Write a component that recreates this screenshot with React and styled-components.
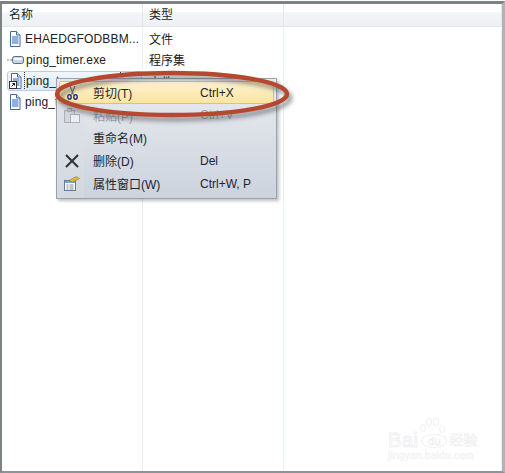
import React from 'react'
import styled, { createGlobalStyle } from 'styled-components'

const Global = createGlobalStyle`
html, body { margin: 0; padding: 0; background: #fff; }
body { font-family: "Liberation Sans", "Noto Sans CJK SC", sans-serif; }
`

const Page = styled.div`
position: relative;
width: 505px;
height: 473px;
overflow: hidden;
box-sizing: border-box;
padding-top: 1px;
`

const Frame = styled.div`
height: 100%;
box-sizing: border-box;
border-style: solid;
border-width: 3px 3px 2px 2px;
border-color: #7d8285 #b0b3b6 #8f9396 #7d8285;
display: flex;
flex-direction: column;
background: #fff;
`

const Header = styled.div`
display: grid;
grid-template-columns: 141px 141px 1fr;
height: 22px;
flex: none;
background: linear-gradient(#ffffff 0, #ffffff 35%, #f3f5f7 40%, #eef0f3 100%);
border-bottom: 1px solid #e3e6ea;
`

const HeadCell = styled.div`
padding-left: ${p => p.$first ? '7px' : '6px'};
font-size: 12px;
line-height: 23px;
color: #1c2530;
border-right: 1px solid #e2e5e9;
`

const Body = styled.div`
flex: 1;
display: grid;
grid-template-columns: 141px 141px 1fr;
grid-template-rows: 21px 21px 22px 20px 1fr;
padding-top: 1px;
`

const Cell = styled.div`
display: flex;
align-items: center;
gap: 2px;
font-size: 12px;
color: #202020;
padding-left: 6px;
white-space: nowrap;
overflow: hidden;
border-right: 1px solid #e6eef8;
`

const Selected = styled(Cell)`
margin: 1px 1px 1px 5px;
padding-left: 1px;
height: 20px;
box-sizing: border-box;
background: linear-gradient(#f0f6fe, #dfeafa);
border: 1px solid #b9cde8;
border-radius: 3px;
`

const IconSlot = styled.span`
display: flex;
flex: none;
width: ${p => p.$wide ? '17px' : '15px'};
margin-left: ${p => p.$wide ? '-1px' : 0};
`

const Name = styled.span`
letter-spacing: 0.15px;
${p => p.$focus && 'outline: 1px dotted #333; padding: 2px 60px 2px 1px; margin-left: -1px;'}
`

const Filler = styled.div`
border-right: 1px solid ${p => p.$last ? 'transparent' : '#e6eef8'};
`

const Menu = styled.div`
position: absolute;
left: 56px;
top: 78px;
width: 221px;
height: 121px;
box-sizing: border-box;
border: 1px solid #98a3b0;
background: linear-gradient(#e9ecf1, #ccd3dd);
box-shadow: 2px 2px 3px rgba(0,0,0,0.25);
display: flex;
flex-direction: column;
padding: 2px;
`

const Gutter = styled.div`
position: absolute;
left: 0;
top: 0;
bottom: 0;
width: 27px;
background: linear-gradient(#e3e6eb, #d3d8e0);
`

const Item = styled.div`
position: relative;
height: ${p => p.$h || 23}px;
flex: none;
display: grid;
grid-template-columns: 34px 107px 1fr;
align-items: center;
font-size: 12px;
color: ${p => p.$off ? '#9aa0a8' : '#1c2430'};
box-sizing: border-box;
${p => p.$active && `
background: linear-gradient(#fdf3d0, #fbe3a0);
box-shadow: inset 0 0 0 1px #e5c365;
border-radius: 2px;
`}
`

const ItemIcon = styled.span`
display: flex;
justify-content: center;
width: 22px;
margin-left: 2px;
`

const Oval = styled.svg`
position: absolute;
left: 45px;
top: 62px;
pointer-events: none;
`

const Mark = styled.div`
position: absolute;
left: 388px;
top: 431px;
width: 92px;
color: #fff;
-webkit-text-stroke: 1px #f0f0f2;
`

const Paw = styled.svg`
position: absolute;
left: 31px;
top: -15px;
`

const MarkTop = styled.div`
display: flex;
align-items: center;
font-size: 20px;
line-height: 19px;
letter-spacing: 0.5px;
`

const MarkBadge = styled.span`
font-size: 11px;
line-height: 12px;
width: 24px;
margin: 0 2px 0 3px;
text-align: center;
letter-spacing: 0;
border: 1px solid #f0f0f2;
border-radius: 50%;
flex: none;
-webkit-text-stroke: 0.5px #ececee;
`

const MarkCn = styled.span`
font-size: 14px;
letter-spacing: 0;
-webkit-text-stroke: 0.5px #ececee;
`

const MarkUrl = styled.div`
font-size: 10px;
line-height: 10px;
letter-spacing: 0.3px;
color: #f3f3f5;
-webkit-text-stroke: 0.4px #f3f3f5;
margin-top: 1px;
`

const DocIcon = ({ shortcut }) => (
  <svg width="14" height="16" viewBox="0 0 14 16">
    <path d="M2.500 .5h6l3.500 3.500v11.500h-9.500z" fill="#fff" stroke="#47689c" />
    <path d="M8.500 .5v3.500h3.500" fill="#dfe8f4" stroke="#47689c" />
    <path d="M4 6h6.500M4 8h6.500M4 10h6.500M4 12h6.500" stroke="#2a5fbb" />
    {shortcut && <>
      <rect x=".5" y="8.500" width="7" height="7" fill="#fff" stroke="#333" />
      <path d="M2.500 13.500l3-3M3.500 10.500h2v2" stroke="#111" fill="none" />
    </>}
  </svg>
)

const ExeIcon = () => (
  <svg width="17" height="12" viewBox="0 0 17 12">
    <path d="M0 6h6" stroke="#7a8290" strokeDasharray="2 1" />
    <rect x="5.500" y="2.500" width="11" height="7" rx="2" fill="#c7d6e6" stroke="#5b6b80" />
    <rect x="7" y="4" width="8" height="2" fill="#f2f7fc" />
  </svg>
)

const Scissors = () => (
  <svg width="11" height="14" viewBox="0 0 11 14">
    <path d="M3 0l3.500 8.500M8 0L4.500 8.500" stroke="#6f737c" strokeWidth="1.200" />
    <ellipse cx="2.500" cy="11" rx="1.700" ry="2.200" fill="none" stroke="#27358f" strokeWidth="1.500" />
    <ellipse cx="8.500" cy="11" rx="1.700" ry="2.200" fill="none" stroke="#27358f" strokeWidth="1.500" />
  </svg>
)

const Paste = () => (
  <svg width="16" height="15" viewBox="0 0 16 15">
    <rect x=".5" y="2.500" width="10" height="12" fill="#d3d6da" stroke="#aab0b8" />
    <rect x="3.500" y=".5" width="4" height="3" fill="#c4c8ce" stroke="#aab0b8" />
    <rect x="6.500" y="6.500" width="9" height="8" fill="#eceef0" stroke="#aab0b8" />
  </svg>
)

const Cross = () => (
  <svg width="14" height="14" viewBox="0 0 14 14">
    <path d="M1 1l12 12M13 1L1 13" stroke="#2d3138" strokeWidth="2" />
  </svg>
)

const Props = () => (
  <svg width="16" height="15" viewBox="0 0 16 15">
    <rect x=".5" y="4.500" width="11" height="10" fill="#fff" stroke="#5f7d9e" />
    <path d="M1 5h10v2H1z" fill="#7fa6cc" />
    <path d="M2.500 9h2M5.500 9h4M2.500 11h2M5.500 11h4M2.500 13h2M5.500 13h4" stroke="#7a8896" />
    <path d="M5 4.500L12 .5l3.500 2L9 6z" fill="#e0b93a" stroke="#7c7a2a" strokeWidth=".5" />
  </svg>
)

const App = () => {
  return (
    <Page>
      <Global />
      <Frame>
        <Header>
          <HeadCell $first>名称</HeadCell>
          <HeadCell>类型</HeadCell>
          <HeadCell />
        </Header>
        <Body>
          <Cell><IconSlot><DocIcon /></IconSlot><Name>EHAEDGFODBBM...</Name></Cell>
          <Cell>文件</Cell>
          <Filler />
          <Cell><IconSlot $wide><ExeIcon /></IconSlot><Name>ping_timer.exe</Name></Cell>
          <Cell>程序集</Cell>
          <Filler />
          <Selected><IconSlot><DocIcon shortcut /></IconSlot><Name $focus>ping_t</Name></Selected>
          <Cell>文件</Cell>
          <Filler />
          <Cell><IconSlot><DocIcon /></IconSlot><Name>ping_t</Name></Cell>
          <Cell>文件</Cell>
          <Filler />
          <Filler />
          <Filler />
          <Filler />
        </Body>
      </Frame>

      <Menu>
        <Gutter />
        <Item $active>
          <ItemIcon><Scissors /></ItemIcon><span>剪切(T)</span><span>Ctrl+X</span>
        </Item>
        <Item $off $h={22}>
          <ItemIcon><Paste /></ItemIcon><span>粘贴(P)</span><span>Ctrl+V</span>
        </Item>
        <Item>
          <ItemIcon /><span>重命名(M)</span><span />
        </Item>
        <Item>
          <ItemIcon><Cross /></ItemIcon><span>删除(D)</span><span>Del</span>
        </Item>
        <Item>
          <ItemIcon><Props /></ItemIcon><span>属性窗口(W)</span><span>Ctrl+W, P</span>
        </Item>
      </Menu>

      <Oval width="260" height="68" viewBox="0 0 260 68">
        <defs>
          <filter id="soft" x="-10%" y="-30%" width="120%" height="160%">
            <feGaussianBlur stdDeviation="2" />
          </filter>
        </defs>
        <ellipse cx="130" cy="36" rx="115" ry="21" fill="none" stroke="#444" strokeOpacity=".5" strokeWidth="5" filter="url(#soft)" />
        <ellipse cx="127" cy="32" rx="115" ry="21" fill="none" stroke="#b5492f" strokeWidth="4.500" />
      </Oval>

      <Mark>
        <Paw width="28" height="20" viewBox="0 0 28 20">
          <g fill="#fff" stroke="#f0f0f2">
            <ellipse cx="4" cy="12" rx="2.500" ry="3.500" />
            <ellipse cx="10" cy="6" rx="2.500" ry="4" />
            <ellipse cx="17" cy="6" rx="2.500" ry="4" />
            <ellipse cx="23" cy="13" rx="2.500" ry="3.500" />
          </g>
        </Paw>
        <MarkTop>Bai<MarkBadge>du</MarkBadge><MarkCn>经验</MarkCn></MarkTop>
        <MarkUrl>jingyan.baidu.com</MarkUrl>
      </Mark>
    </Page>
  )
}

export default App
